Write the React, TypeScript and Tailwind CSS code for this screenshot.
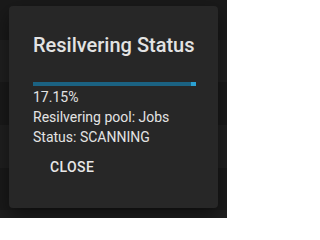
import React from 'react';

const bands = [
  'h-[40px] bg-[#1a1a1a]',
  'h-[42px] bg-[#202020]',
  'h-[43px] bg-[#1a1a1a]',
  'h-[43px] bg-[#202020]',
  'h-[42px] bg-[#1a1a1a]',
  'h-[8px] bg-[#202020]',
];

const App: React.FC = () => {
  return (
    <div className="relative w-[227px] h-[218px] overflow-hidden bg-[#1a1a1a] font-['Roboto','Liberation_Sans',sans-serif]">
      {/* dimmed page behind the dialog */}
      <div className="flex flex-col">
        {bands.map((b, i) => (
          <div key={i} className={b} />
        ))}
      </div>

      {/* Dialog */}
      <div className="absolute left-[9px] top-[6px] w-[209px] h-[202px] rounded-[4px] bg-[#272727] shadow-[0_8px_20px_rgba(0,0,0,0.5)] flex flex-col px-[24px] text-[#e3e3e3]">
        <h2 className="shrink-0 mt-[23px] whitespace-nowrap text-[20px] leading-[32px] font-medium">Resilvering Status</h2>
        <div className="shrink-0 mt-[21px] flex h-[4px] w-[163px]">
          <div className="flex-1 bg-[#1b6282]" />
          <div className="w-[5px] bg-[#2ba0d2]" />
        </div>
        <div className="shrink-0 mt-[1px] whitespace-nowrap text-[14px] leading-[20px]">
          <p>17.15%</p>
          <p>Resilvering pool: Jobs</p>
          <p>Status: SCANNING</p>
        </div>
        <div className="shrink-0 mt-[2px] flex">
          <button className="ml-[9px] px-[8px] py-[6px] text-[14px] leading-[24.5px] font-medium uppercase tracking-[0.4px] text-[#e8e8e8]">
            Close
          </button>
        </div>
      </div>
    </div>
  );
};

export default App;
